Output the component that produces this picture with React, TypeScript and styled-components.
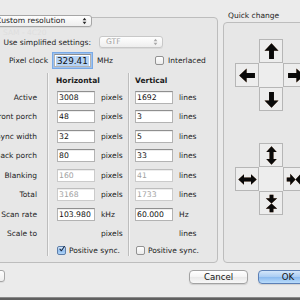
import React from "react";
import styled, { createGlobalStyle } from "styled-components";

const GlobalStyle = createGlobalStyle`
  html, body { margin: 0; padding: 0; }
  body {
    width: 300px;
    height: 300px;
    overflow: hidden;
    background: #5f5f5f;
    font-family: "DejaVu Sans", sans-serif;
  }
`;

const Window = styled.div`
  position: relative;
  box-sizing: border-box;
  width: 340px;
  height: 298px;
  margin-left: -12px;
  background: #ebebeb;
  border-bottom: 1px solid #8a8a8a;
  display: flex;
  flex-direction: column;
  font-size: 7.5px;
  color: #1c1c1c;
`;

const Main = styled.div`
  display: flex;
  align-items: flex-start;
  gap: 5px;
`;

const LeftBox = styled.div`
  margin-top: 17px;
  width: 230px;
  height: 246px;
  box-sizing: border-box;
  border: 1px solid #bdbdbd;
  border-radius: 4px;
  background: #e7e7e7;
  display: flex;
  flex-direction: column;
`;

const Popup = styled.div<{ $w: number; $disabled?: boolean; $mt?: number; $ml?: number }>`
  box-sizing: border-box;
  width: ${(p) => p.$w}px;
  height: 12px;
  margin-top: ${(p) => p.$mt ?? 0}px;
  margin-left: ${(p) => p.$ml ?? 0}px;
  flex: none;
  display: flex;
  align-items: center;
  justify-content: space-between;
  padding: 0 4px 0 6px;
  border: 1px solid ${(p) => (p.$disabled ? "#c8c8c8" : "#a6a6a6")};
  border-radius: 3px;
  background: linear-gradient(#fefefe, #eeeeee);
  box-shadow: 0 1px 0 rgba(0, 0, 0, 0.06);
  color: ${(p) => (p.$disabled ? "#a2a2a2" : "#1c1c1c")};
  font-size: 7.6px;
  line-height: 10px;
  white-space: nowrap;
`;

const Row = styled.div<{ $mt: number; $h: number; $gap?: number }>`
  margin-top: ${(p) => p.$mt}px;
  height: ${(p) => p.$h}px;
  display: flex;
  align-items: center;
  gap: ${(p) => p.$gap ?? 0}px;
  flex: none;
`;

const Label = styled.span<{ $w: number }>`
  box-sizing: border-box;
  width: ${(p) => p.$w}px;
  display: flex;
  justify-content: flex-end;
  white-space: nowrap;
  flex: none;
`;

const Field = styled.div<{ $w: number; $disabled?: boolean; $big?: boolean; $focus?: boolean }>`
  box-sizing: border-box;
  width: ${(p) => p.$w}px;
  height: 13px;
  flex: none;
  display: flex;
  align-items: center;
  padding-left: 1px;
  background: #ffffff;
  border: 1px solid ${(p) => (p.$disabled ? "#cbcbcb" : "#b3b3b3")};
  border-top-color: ${(p) => (p.$disabled ? "#bdbdbd" : "#8f8f8f")};
  box-shadow: ${(p) =>
    p.$focus
      ? "0 0 0 1px #9ec2ee, 0 0 0 2px #79a9e6"
      : "inset 0 1px 0 rgba(0,0,0,0.07)"};
  color: ${(p) => (p.$disabled ? "#a2a2a2" : "#111")};
  font-size: ${(p) => (p.$big ? 8.8 : 7.7)}px;
  line-height: 11px;
  white-space: nowrap;
`;

const FieldSpacer = styled.div<{ $w: number }>`
  width: ${(p) => p.$w}px;
  height: 13px;
  flex: none;
`;

const Selected = styled.span`
  background: #b5d3f5;
  padding: 0 1px;
  line-height: 10px;
`;

const Unit = styled.span<{ $w?: number; $ml?: number }>`
  margin-left: ${(p) => p.$ml ?? 6}px;
  ${(p) => (p.$w ? `width: ${p.$w}px;` : "")}
  flex: none;
  white-space: nowrap;
`;

const Check = styled.span<{ $checked?: boolean }>`
  box-sizing: border-box;
  width: 9px;
  height: 9px;
  flex: none;
  border: 1px solid ${(p) => (p.$checked ? "#5d7ea9" : "#929292")};
  border-radius: 2px;
  background: ${(p) =>
    p.$checked
      ? "linear-gradient(#d6e7fa, #92bff0 55%, #b4d6f7)"
      : "linear-gradient(#ffffff, #ebebeb)"};
  display: inline-flex;
  align-items: center;
  justify-content: center;
  margin-right: 3px;
  overflow: visible;
`;

const CheckLabel = styled.span<{ $ml?: number }>`
  display: flex;
  align-items: center;
  margin-left: ${(p) => p.$ml ?? 0}px;
  white-space: nowrap;
`;

const Table = styled.div`
  margin-top: 6px;
  height: 183px;
  display: flex;
  flex: none;
`;

const Col = styled.div<{ $w?: number; $pl?: number; $pr?: number; $divider?: boolean }>`
  box-sizing: border-box;
  ${(p) => (p.$w ? `width: ${p.$w}px; flex: none;` : "flex: 1;")}
  padding-left: ${(p) => p.$pl ?? 0}px;
  padding-right: ${(p) => p.$pr ?? 0}px;
  display: flex;
  flex-direction: column;
  ${(p) =>
    p.$divider
      ? "border-left: 1px solid #bdbdbd; box-shadow: inset 1px 0 0 #f5f5f5;"
      : ""}
`;

const Header = styled.div<{ $ml?: number }>`
  height: 14.25px;
  flex: none;
  display: flex;
  align-items: center;
  font-weight: bold;
  margin-left: ${(p) => p.$ml ?? 0}px;
`;

const Cell = styled.div<{ $h?: number; $right?: boolean }>`
  height: ${(p) => p.$h ?? 19.5}px;
  flex: none;
  display: flex;
  align-items: center;
  justify-content: ${(p) => (p.$right ? "flex-end" : "flex-start")};
  white-space: nowrap;
`;

const RightCol = styled.div`
  display: flex;
  flex-direction: column;
`;

const BoxTitle = styled.div`
  margin-top: 11px;
  margin-left: 5px;
  height: 10px;
  line-height: 10px;
  white-space: nowrap;
`;

const QBox = styled.div`
  margin-top: 1px;
  box-sizing: border-box;
  width: 100px;
  height: 241px;
  border: 1px solid #bdbdbd;
  border-radius: 4px;
  background: #e7e7e7;
  padding: 16px 0 0 11px;
  display: flex;
  flex-direction: column;
  gap: 32px;
`;

const Cross = styled.div`
  display: grid;
  grid-template-columns: repeat(3, 24px);
  grid-template-rows: repeat(3, 24px);
`;

const Pad = styled.div<{ $kind: "btn" | "center" | "none" }>`
  box-sizing: border-box;
  width: 24px;
  height: 24px;
  display: flex;
  align-items: center;
  justify-content: center;
  ${(p) =>
    p.$kind === "btn"
      ? "border: 1px solid #b6b6b6; background: #ededed;"
      : p.$kind === "center"
      ? "background: #ededed;"
      : ""}
`;

const ArrowSvg = styled.svg`
  width: 21px;
  height: 21px;
  filter: drop-shadow(0.6px 0.6px 0 rgba(185, 95, 30, 0.55));
`;

const Footer = styled.div`
  display: flex;
  align-items: flex-start;
  padding: 7px 10px 0 0;
`;

const Spacer = styled.div`
  flex: 1;
`;

const Button = styled.div<{ $w: number; $default?: boolean; $ml?: number }>`
  box-sizing: border-box;
  width: ${(p) => p.$w}px;
  height: 14px;
  margin-left: ${(p) => p.$ml ?? 0}px;
  display: flex;
  align-items: center;
  justify-content: center;
  border-radius: 4px;
  font-size: 8.6px;
  color: #111;
  border: 1px solid ${(p) => (p.$default ? "#5c80b6" : "#a2a2a2")};
  background: ${(p) =>
    p.$default
      ? "linear-gradient(#d3e6fa, #a9ccf3 50%, #8bbaef 52%, #b9dcfb)"
      : "linear-gradient(#ffffff, #f4f4f4 50%, #e9e9e9 52%, #f8f8f8)"};
  box-shadow: 0 1px 1px rgba(0, 0, 0, 0.12);
`;

const Ghosts = styled.div`
  position: absolute;
  inset: 0;
  pointer-events: none;
  color: #dedede;
  font-size: 7.5px;
`;

const Ghost = styled.span<{ $x: number; $y: number }>`
  position: absolute;
  left: ${(p) => p.$x + 12}px;
  top: ${(p) => p.$y}px;
  white-space: nowrap;
`;

function PopupArrows({ color = "#2a2a2a" }: { color?: string }) {
  return (
    <svg width="5" height="8" viewBox="0 0 5 8">
      <path d="M0.6 3.2 L2.5 0.8 L4.4 3.2 Z" fill={color} />
      <path d="M0.6 4.8 L2.5 7.2 L4.4 4.8 Z" fill={color} />
    </svg>
  );
}

function CheckMark() {
  return (
    <svg width="10" height="10" viewBox="0 0 10 10" style={{ marginTop: -2, marginLeft: 1 }}>
      <path d="M1.5 5.2 L4 8 L9 0.8" stroke="#15233a" strokeWidth="1.7" fill="none" strokeLinecap="round" strokeLinejoin="round" />
    </svg>
  );
}

const SINGLE = "M12 2.5 L20 11 L14.8 11 L14.8 20.5 L9.2 20.5 L9.2 11 L4 11 Z";
const DOUBLE = "M12 1.5 L18 8 L14.3 8 L14.3 16 L18 16 L12 22.5 L6 16 L9.7 16 L9.7 8 L6 8 Z";
const INWARD = "M9.8 2 H14.2 V6 H18.5 L12 12 L18.5 18 H14.2 V22 H9.8 V18 H5.5 L12 12 L5.5 6 H9.8 Z";

function Arrow({ d, rot = 0 }: { d: string; rot?: number }) {
  return (
    <ArrowSvg viewBox="0 0 24 24">
      <path d={d} fill="#0a0a0a" transform={`rotate(${rot} 12 12)`} />
    </ArrowSvg>
  );
}

function CrossPad({ top, left, right, bottom }: { top: React.ReactNode; left: React.ReactNode; right: React.ReactNode; bottom: React.ReactNode }) {
  return (
    <Cross>
      <Pad $kind="none" />
      <Pad $kind="btn">{top}</Pad>
      <Pad $kind="none" />
      <Pad $kind="btn">{left}</Pad>
      <Pad $kind="center" />
      <Pad $kind="btn">{right}</Pad>
      <Pad $kind="none" />
      <Pad $kind="btn">{bottom}</Pad>
      <Pad $kind="none" />
    </Cross>
  );
}

type Entry = { label: string; h?: string; hu: string; v?: string; vu: string; disabled?: boolean; empty?: boolean };

const rows: Entry[] = [
  { label: "Active", h: "3008", hu: "pixels", v: "1692", vu: "lines" },
  { label: "Front porch", h: "48", hu: "pixels", v: "3", vu: "lines" },
  { label: "Sync width", h: "32", hu: "pixels", v: "5", vu: "lines" },
  { label: "Back porch", h: "80", hu: "pixels", v: "33", vu: "lines" },
  { label: "Blanking", h: "160", hu: "pixels", v: "41", vu: "lines", disabled: true },
  { label: "Total", h: "3168", hu: "pixels", v: "1733", vu: "lines", disabled: true },
  { label: "Scan rate", h: "103.980", hu: "kHz", v: "60.000", vu: "Hz" },
  { label: "Scale to", hu: "pixels", vu: "lines", empty: true },
];

export default function App() {
  return (
    <>
      <GlobalStyle />
      <Window>
        <Ghosts>
          <Ghost $x={3} $y={28}>SAM - 4C20</Ghost>
        </Ghosts>
        <Main>
          <LeftBox>
            <Popup $w={103} $mt={-3}>
              <span>Custom resolution</span>
              <PopupArrows />
            </Popup>

            <Row $mt={9} $h={12} $gap={8}>
              <Label $w={102}>Use simplified settings:</Label>
              <Popup $w={64} $disabled>
                <span>GTF</span>
                <PopupArrows color="#a8a8a8" />
              </Popup>
            </Row>

            <Row $mt={6} $h={13} $gap={6}>
              <Label $w={59}>Pixel clock</Label>
              <Field $w={37} $big $focus>
                <Selected>329.41</Selected>
              </Field>
              <Unit $ml={0} $w={58}>MHz</Unit>
              <CheckLabel $ml={-6}>
                <Check />
                <span style={{ marginLeft: 1 }}>Interlaced</span>
              </CheckLabel>
            </Row>

            <Table>
              <Col $w={58} $pr={10}>
                <Header />
                {rows.map((r) => (
                  <Cell key={r.label} $right>
                    <Label $w={48}>{r.label}</Label>
                  </Cell>
                ))}
              </Col>

              <Col $w={81} $pl={9} $divider>
                <Header $ml={-1}>Horizontal</Header>
                {rows.map((r) => (
                  <Cell key={r.label}>
                    {r.empty ? (
                      <FieldSpacer $w={38} />
                    ) : (
                      <Field $w={38} $disabled={r.disabled}>
                        {r.h}
                      </Field>
                    )}
                    <Unit>{r.hu}</Unit>
                  </Cell>
                ))}
                <Cell $h={13.5}>
                  <CheckLabel>
                    <Check $checked>
                      <CheckMark />
                    </Check>
                    Positive sync.
                  </CheckLabel>
                </Cell>
              </Col>

              <Col $pl={6} $divider>
                <Header>Vertical</Header>
                {rows.map((r) => (
                  <Cell key={r.label}>
                    {r.empty ? (
                      <FieldSpacer $w={38} />
                    ) : (
                      <Field $w={38} $disabled={r.disabled}>
                        {r.v}
                      </Field>
                    )}
                    <Unit>{r.vu}</Unit>
                  </Cell>
                ))}
                <Cell $h={13.5}>
                  <CheckLabel $ml={1}>
                    <Check />
                    Positive sync.
                  </CheckLabel>
                </Cell>
              </Col>
            </Table>
          </LeftBox>

          <RightCol>
            <BoxTitle>Quick change</BoxTitle>
            <QBox>
              <CrossPad
                top={<Arrow d={SINGLE} />}
                left={<Arrow d={SINGLE} rot={-90} />}
                right={<Arrow d={SINGLE} rot={90} />}
                bottom={<Arrow d={SINGLE} rot={180} />}
              />
              <CrossPad
                top={<Arrow d={DOUBLE} />}
                left={<Arrow d={DOUBLE} rot={90} />}
                right={<Arrow d={INWARD} rot={90} />}
                bottom={<Arrow d={INWARD} />}
              />
            </QBox>
          </RightCol>
        </Main>

        <Footer>
          <Popup $w={40} $ml={-23}>
            <span />
            <PopupArrows />
          </Popup>
          <Spacer />
          <Button $w={59}>Cancel</Button>
          <Button $w={60} $ml={10} $default>
            OK
          </Button>
        </Footer>
      </Window>
    </>
  );
}
